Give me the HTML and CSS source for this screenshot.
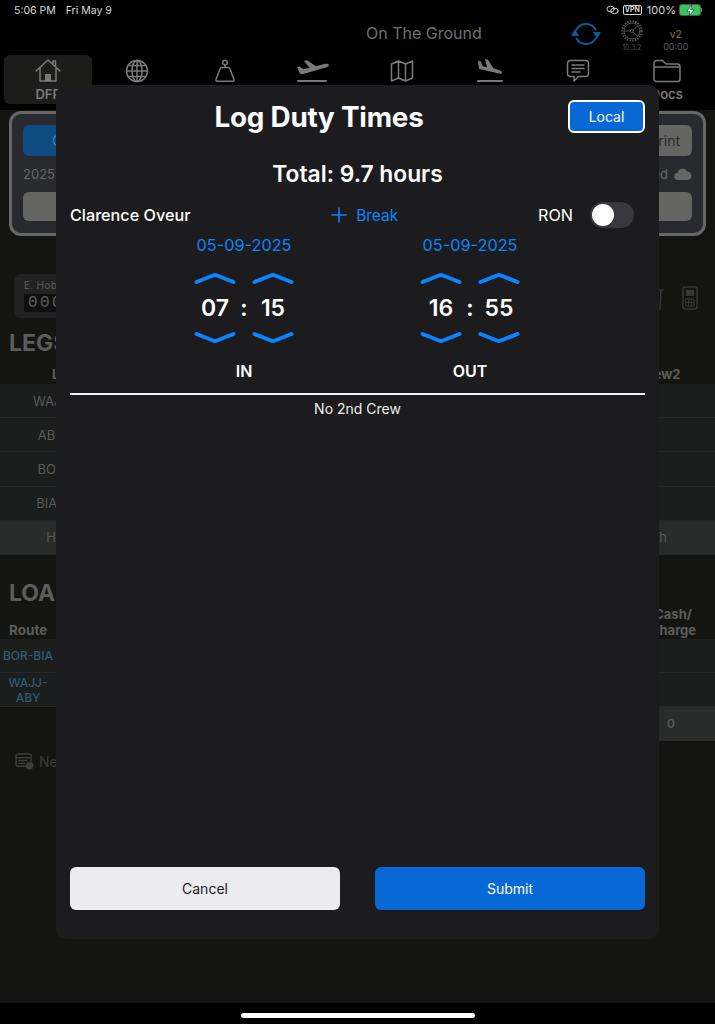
FILE: index.html
```html
<!DOCTYPE html>
<html lang="en">
<head>
    <meta charset="UTF-8">
    <meta name="viewport" content="width=device-width, initial-scale=1.0">
    <title>Log Duty Times</title>
    <link rel="stylesheet" href="styles.css">
</head>
<body>
    <div class="screen">
        <div class="status-bar">
            <span class="status-time">5:06 PM</span>
            <span class="status-date">Fri May 9</span>
            <span class="status-right">
                <svg class="status-link" viewBox="0 0 14 10" width="13" height="10"><ellipse cx="5" cy="4" rx="4" ry="3"/><ellipse cx="9" cy="6" rx="4" ry="3"/></svg>
                <span class="vpn">VPN</span>
                <span>100%</span>
                <span class="battery">
                    <span class="battery-body"><svg viewBox="0 0 12 12" width="11" height="11"><path d="M7 0 2 7h3.400L4.600 12 10 5H6.400z"/></svg></span>
                    <span class="battery-tip"></span>
                </span>
            </span>
        </div>

        <div class="top-row">
            <span class="flight-state">On The Ground</span>
            <svg class="sync-icon" viewBox="0 0 28 28" width="28" height="28">
                <path d="M4.500 9.500A11 11 0 0 1 23.500 9.500"/>
                <path d="M23.500 18.500A11 11 0 0 1 4.500 18.500"/>
                <path class="fill" d="M-1 16 3 9l4 7zM21 12l4 7 4-7z"/>
            </svg>
            <div class="gear-box">
                <svg viewBox="0 0 22 22" width="22" height="22"><circle cx="11" cy="11" r="9.700" stroke-width="2" stroke-dasharray="1.500 1.200" stroke-linecap="butt"/><circle cx="11" cy="11" r="8"/><circle cx="11" cy="11" r="1.500"/><path d="M9.500 11H3.500M12 10l5-4.500M12 12l5 4.500"/></svg>
                <span>10.3.2</span>
            </div>
            <div class="version-box">
                <b>v2</b>
                <span>00:00</span>
            </div>
        </div>

        <div class="tabs">
            <div class="tab active">
                <svg viewBox="0 0 26 24" width="26" height="24"><path d="M1 12 13 1l12 11M5 9v13h16V9M18 5V2h2.500v5"/><path class="fill" d="M10 15h6v7h-6z"/></svg>
                <span>DFR</span>
            </div>
            <div class="tab">
                <svg viewBox="0 0 24 24" width="24" height="24"><circle cx="12" cy="12" r="10.500"/><ellipse cx="12" cy="12" rx="5" ry="10.500"/><path d="M12 1.500v21M1.500 12h21M3 6.500h18M3 17.500h18"/></svg>
            </div>
            <div class="tab">
                <svg viewBox="0 0 22 24" width="22" height="24"><circle cx="11" cy="3.500" r="2.300"/><path d="M11 6v2M7.500 8.500h7q1 0 1.300 1l4.200 11q.4 1.800-1.300 1.800H3.300q-1.700 0-1.300-1.800l4.200-11q.3-1 1.300-1z"/></svg>
            </div>
            <div class="tab">
                <svg viewBox="0 0 32 24" width="32" height="24"><path class="fill" d="M0 8l2.500-.6 4 2.800 6-1.500L7 2l3-.7 9 6 8-2.200c3-.8 5 0 5 1.200 0 1-2 2-5 2.800L6 15c-2 .5-3-.2-3.500-1.200z"/><path d="M1 22h28" stroke-width="2"/></svg>
            </div>
            <div class="tab">
                <svg viewBox="0 0 24 24" width="24" height="24"><path d="M1.500 5 8.500 2l7 3 7-3v17l-7 3-7-3-7 3zM8.500 2v17M15.500 5v17"/></svg>
            </div>
            <div class="tab">
                <svg viewBox="0 0 26 24" width="26" height="24"><path class="fill" d="M1 2l2.500.2 2.500 5 4 1L8 0l3 .8 5.500 8.500 5.500 1.700c2.500.8 3.500 2 3 3-.5.800-2 .8-4 .3L2 10z"/><path d="M1 22h24" stroke-width="2"/></svg>
            </div>
            <div class="tab">
                <svg viewBox="0 0 24 24" width="24" height="24"><path d="M4.500 1.500h15a3 3 0 0 1 3 3v10a3 3 0 0 1-3 3h-7l-4.500 4.500v-4.500H4.500a3 3 0 0 1-3-3v-10a3 3 0 0 1 3-3zM6 6h12M6 9.500h12M6 13h8"/></svg>
            </div>
            <div class="tab">
                <svg viewBox="0 0 28 24" width="28" height="24"><path d="M1 20V4a2.500 2.500 0 0 1 2.500-2.500h6l3.500 3.500h11.500A2.500 2.500 0 0 1 27 7.500V20a2.500 2.500 0 0 1-2.500 2.500h-21A2.500 2.500 0 0 1 1 20zM1 8h26"/></svg>
                <span>Docs</span>
            </div>
        </div>

        <div class="main">
            <div class="flight-card">
                <div class="card-row">
                    <div class="card-btn blue">Check</div>
                    <div class="card-btn">Print</div>
                </div>
                <div class="card-info">
                    <span>2025</span>
                    <span class="card-saved">Saved
                        <svg viewBox="0 0 18 12" width="18" height="12"><path class="fill" d="M4 12a3.500 3.500 0 0 1-.5-7A5 5 0 0 1 13 3.500 4.300 4.300 0 0 1 14 12z"/></svg>
                    </span>
                </div>
                <div class="card-btn wide"></div>
            </div>

            <div class="hobbs-row">
                <div class="hobbs">
                    <span>E. Hobbs</span>
                    <div class="hobbs-digits">0000</div>
                </div>
                <div class="hobbs-icons">
                    <svg viewBox="0 0 16 24" width="16" height="24"><path d="M0 4h16M2 4l1 19h10l1-19M6 4V1h4v3"/></svg>
                    <svg viewBox="0 0 16 24" width="16" height="24"><rect x="1" y="1" width="14" height="22" rx="2.500"/><path class="fill" d="M4 4h8v6H4z"/><path d="M4 13h8v7H4zM6.700 13v7M9.300 13v7M4 16.500h8" stroke-width="1"/></svg>
                </div>
            </div>

            <h2 class="section-title legs-title">LEGS</h2>
            <div class="data-table">
                <div class="table-head"><span class="leg-head">Leg</span><span class="col-right">Crew2</span></div>
                <div class="table-row"><span class="col-first">WAJJ</span></div>
                <div class="table-row"><span class="col-first">ABY</span></div>
                <div class="table-row"><span class="col-first">BOR</span></div>
                <div class="table-row"><span class="col-first">BIAK</span></div>
                <div class="table-row row-total"><span class="col-first">H</span><span class="col-right">Th</span></div>
            </div>

            <h2 class="section-title load-title">LOAD</h2>
            <div class="data-table">
                <div class="table-head load-head"><span class="route-head">Route</span><span class="col-cash">Cash/<br>Charge</span></div>
                <div class="table-row"><span class="col-route">BOR-BIA</span></div>
                <div class="table-row"><span class="col-route">WAJJ-<br>ABY</span></div>
                <div class="table-row load-total"><span class="load-sum">0</span></div>
            </div>

            <div class="new-row">
                <svg viewBox="0 0 20 18" width="19" height="17"><path d="M13 14H3a2 2 0 0 1-2-2V3a2 2 0 0 1 2-2h12a2 2 0 0 1 2 2v6M1 5h16M4 8h8M4 11h6"/><circle class="fill" cx="15.500" cy="13.500" r="4"/></svg>
                <span>New</span>
            </div>
        </div>

        <div class="home-area"><div class="home-bar"></div></div>
    </div>

    <div class="modal">
        <div class="modal-head">
            <h1>Log Duty Times</h1>
            <button class="local-btn">Local</button>
        </div>
        <div class="total-hours">Total: 9.7 hours</div>

        <div class="crew-row">
            <span class="crew-name">Clarence Oveur</span>
            <span class="add-break">
                <svg viewBox="0 0 14 14" width="14" height="14"><path d="M7 0v14M0 7h14"/></svg>
                Break
            </span>
            <span class="ron">
                RON
                <span class="toggle"><span class="knob"></span></span>
            </span>
        </div>

        <div class="times">
            <div class="time-col">
                <div class="date">05-09-2025</div>
                <div class="picker">
                    <div class="spin">
                        <svg class="chev" viewBox="0 0 44 14" width="44" height="14"><path d="M3.500 11 20 4.500q2-.8 4 0L40.500 11"/></svg>
                        <span>07</span>
                        <svg class="chev" viewBox="0 0 44 14" width="44" height="14"><path d="M3.500 3 20 9.500q2 .8 4 0L40.500 3"/></svg>
                    </div>
                    <span class="colon">:</span>
                    <div class="spin">
                        <svg class="chev" viewBox="0 0 44 14" width="44" height="14"><path d="M3.500 11 20 4.500q2-.8 4 0L40.500 11"/></svg>
                        <span>15</span>
                        <svg class="chev" viewBox="0 0 44 14" width="44" height="14"><path d="M3.500 3 20 9.500q2 .8 4 0L40.500 3"/></svg>
                    </div>
                </div>
                <div class="time-label">IN</div>
            </div>
            <div class="time-col">
                <div class="date">05-09-2025</div>
                <div class="picker">
                    <div class="spin">
                        <svg class="chev" viewBox="0 0 44 14" width="44" height="14"><path d="M3.500 11 20 4.500q2-.8 4 0L40.500 11"/></svg>
                        <span>16</span>
                        <svg class="chev" viewBox="0 0 44 14" width="44" height="14"><path d="M3.500 3 20 9.500q2 .8 4 0L40.500 3"/></svg>
                    </div>
                    <span class="colon">:</span>
                    <div class="spin">
                        <svg class="chev" viewBox="0 0 44 14" width="44" height="14"><path d="M3.500 11 20 4.500q2-.8 4 0L40.500 11"/></svg>
                        <span>55</span>
                        <svg class="chev" viewBox="0 0 44 14" width="44" height="14"><path d="M3.500 3 20 9.500q2 .8 4 0L40.500 3"/></svg>
                    </div>
                </div>
                <div class="time-label">OUT</div>
            </div>
        </div>

        <div class="divider"></div>
        <div class="no-crew">No 2nd Crew</div>

        <div class="modal-actions">
            <button class="btn-cancel">Cancel</button>
            <button class="btn-submit">Submit</button>
        </div>
    </div>
</body>
</html>
```

FILE: styles.css
```css
* { box-sizing: border-box; }
html, body {
    margin: 0;
    height: 1024px;
    overflow: hidden;
    background: #000;
    font-family: Inter, "Noto Sans", sans-serif;
}
svg { display: block; fill: none; stroke: currentColor; stroke-width: 1.5; stroke-linecap: round; stroke-linejoin: round; overflow: visible; }
svg .fill { fill: currentColor; stroke: none; }

.screen { height: 1024px; display: flex; flex-direction: column; }

/* status bar */
.status-bar {
    height: 20px;
    padding: 0 13px 0 14px;
    display: flex;
    align-items: center;
    gap: 10px;
    color: #d8d8d8;
    font-size: 10.5px;
}
.status-right { margin-left: auto; display: flex; align-items: center; gap: 5px; font-size: 11px; }
.status-link { stroke-width: 1; margin-right: -1px; }
.vpn {
    border: 1px solid #d8d8d8;
    border-radius: 2px;
    font-size: 7px;
    font-weight: 700;
    padding: 0 1px;
    line-height: 8px;
}
.battery { display: flex; align-items: center; gap: 1px; margin-left: -1px; }
.battery-body {
    width: 20px;
    height: 10px;
    background: #34c759;
    border-radius: 2px;
    box-shadow: 0 0 0 1px #555;
    display: flex;
    align-items: center;
    justify-content: center;
}
.battery-body svg { fill: #fff; stroke: #111; stroke-width: .6; }
.battery-tip { width: 1px; height: 4px; background: #888; }

/* top row */
.top-row { height: 35px; display: flex; align-items: flex-start; color: #6e6e6e; }
.flight-state { margin-left: 366px; margin-top: 3px; font-size: 16px; color: #6f6f6f; line-height: 20px; }
.sync-icon { margin-left: 90px; color: #0a5a9e; stroke-width: 2; }
.gear-box { margin-left: 12px; width: 40px; display: flex; flex-direction: column; align-items: center; font-size: 7px; color: #505050; gap: 1px; }
.gear-box svg { stroke-width: 1; }
.version-box { margin-left: 4px; width: 40px; display: flex; flex-direction: column; align-items: center; font-size: 9px; margin-top: 8px; color: #5e5e5e; gap: 1px; }
.version-box b { color: #836a12; font-weight: 500; font-size: 10px; }

/* tabs */
.tabs { height: 49px; padding: 0 4px; display: flex; color: #7a7a7a; margin-bottom: 6px; }
.tab {
    flex: 1;
    display: flex;
    flex-direction: column;
    align-items: center;
    padding-top: 4px;
    gap: 3px;
    border-radius: 6px;
    font-size: 13px;
    font-weight: 600;
}
.tab.active { background: #1c1d1b; }

/* dimmed page behind the dialog */
.main { flex: 1; background: #141513; padding-top: 1px; color: #5c5c5c; }
.flight-card {
    margin: 0 9px;
    height: 125px;
    border: 3px solid #666766;
    border-radius: 12px;
    background: #292a2d;
    padding: 11px 11px;
}
.card-row { display: flex; justify-content: space-between; }
.card-btn {
    width: 120px;
    height: 31px;
    background: #656664;
    border-radius: 6px;
    color: #2a2a2a;
    font-size: 14px;
    display: flex;
    align-items: center;
    justify-content: flex-end;
    padding-right: 12px;
}
.card-btn.blue { background: #0e4b82; color: #3f7fb3; justify-content: flex-start; padding-left: 29px; }
.card-btn.wide { width: 100%; height: 29px; justify-content: center; }
.card-info {
    height: 36px;
    display: flex;
    justify-content: space-between;
    align-items: center;
    font-size: 13px;
    color: #666;
    padding-bottom: 1px;
}
.card-saved { display: flex; align-items: center; gap: 6px; }

.hobbs-row { margin: 38px 17px 0 14px; height: 44px; display: flex; justify-content: space-between; align-items: center; }
.hobbs { width: 120px; height: 44px; background: #212221; border-radius: 6px; padding: 4px 10px; font-size: 10px; line-height: 14px; letter-spacing: .3px; color: #5c5c5c; }
.hobbs-digits { background: #0f0f0f; margin-top: 2px; height: 18px; font-family: "Liberation Mono", monospace; font-size: 16px; letter-spacing: 2.400px; line-height: 18px; color: #5f5f5f; padding-left: 4px; }
.hobbs-icons { display: flex; gap: 19px; align-items: center; color: #363636; margin-top: 4px; }

.section-title { margin: 0; padding-left: 9px; font-size: 23px; font-weight: 700; color: #5c5c5c; line-height: 28px; }
.legs-title { margin-top: 11px; }
.load-title { margin-top: 24px; }

.table-head { height: 18px; margin-top: 9px; font-size: 13px; font-weight: 700; color: #5c5c5c; display: flex; justify-content: space-between; }
.leg-head { padding-left: 52px; line-height: 16px; }
.route-head { padding-left: 9px; align-self: flex-end; font-size: 13.500px; line-height: 18px; }
.load-head { height: 33px; margin-top: -1px; }
.col-cash { width: 50px; margin-right: 17px; text-align: center; line-height: 16px; }
.table-row {
    height: 34.200px;
    display: flex;
    align-items: center;
    justify-content: space-between;
    background: #1c1d1d;
    border-bottom: 1px solid #262727;
    font-size: 13px;
    color: #595959;
}
.table-row.row-total { background: #2a2b2b; }
.table-row.load-total { background: transparent; justify-content: flex-end; border: 0; }
.load-sum { display: block; background: #2a2b2b; width: 56px; height: 34px; line-height: 34px; padding-left: 8px; font-weight: 600; font-size: 12px; }
.col-first { width: 102px; text-align: center; }
.col-right { width: 76px; padding-right: 36px; text-align: center; white-space: nowrap; }
.col-route { width: 56px; text-align: center; font-size: 12px; color: #2f5c73; font-weight: 500; line-height: 15px; }

.new-row { margin: 11px 0 0 15px; display: flex; align-items: center; gap: 5px; font-size: 14px; color: #3c3c3c; }

.home-area { height: 21px; background: #000; display: flex; justify-content: center; padding-top: 10px; }
.home-bar { width: 234px; height: 5px; border-radius: 3px; background: #fff; }

/* dialog */
.modal {
    position: absolute;
    left: 56px;
    top: 85px;
    width: 603px;
    height: 854px;
    background: #1c1c1e;
    border-radius: 10px;
    padding: 15px 14px 29px;
    display: flex;
    flex-direction: column;
    color: #fff;
}
.modal-head { display: flex; align-items: center; height: 33px; }
.modal-head h1 { flex: 1; margin: 0; text-align: center; font-size: 27.800px; font-weight: 700; letter-spacing: -.2px; }
.local-btn {
    width: 77px;
    height: 33px;
    background: #0768d6;
    border: 2px solid #fff;
    border-radius: 6px;
    color: #fff;
    font: 400 14px Inter, sans-serif;
}
.total-hours { margin-top: 27px; text-align: center; font-size: 22.800px; font-weight: 600; line-height: 28px; }
.crew-row {
    margin-top: 14px;
    height: 26px;
    padding-right: 11px;
    display: flex;
    justify-content: space-between;
    align-items: center;
    font-size: 16.200px;
}
.crew-name { font-weight: 500; }
.add-break { display: flex; align-items: center; gap: 10px; font-size: 15.500px; color: #0a84ff; margin-left: 2px; }
.add-break svg { stroke-width: 1.600; }
.ron { display: flex; align-items: center; gap: 17px; }
.toggle { width: 44px; height: 26px; border-radius: 13px; background: #39393d; padding: 2px; }
.knob { display: block; width: 22px; height: 22px; border-radius: 50%; background: #fff; }

.times { margin-top: 7px; padding-left: 61px; display: grid; grid-template-columns: 226px 226px; }
.time-col { display: flex; flex-direction: column; align-items: center; }
.date { font-size: 16.300px; line-height: 20px; color: #0a84ff; }
.picker { margin-top: 16px; display: flex; align-items: center; justify-content: center; }
.spin { width: 44px; display: flex; flex-direction: column; align-items: center; font-size: 23px; font-weight: 600; line-height: 46px; }
.chev { color: #0a84ff; stroke-width: 4; }
.colon { width: 14px; text-align: center; font-size: 23px; font-weight: 600; }
.time-label { margin-top: 16px; font-size: 16px; font-weight: 600; line-height: 20px; }
.divider { margin-top: 12px; height: 2px; background: #f2f2f2; }
.no-crew { margin-top: 5px; text-align: center; font-size: 14px; line-height: 17px; color: #eee; }
.modal-actions { margin-top: auto; display: grid; grid-template-columns: 1fr 1fr; gap: 35px; }
.modal-actions button { height: 43px; border: 0; border-radius: 6px; font: 400 14px Inter, sans-serif; }
.btn-cancel { background: #ebebf0; color: #1c1c1e; }
.btn-submit { background: #0768d6; color: #fff; }
```
